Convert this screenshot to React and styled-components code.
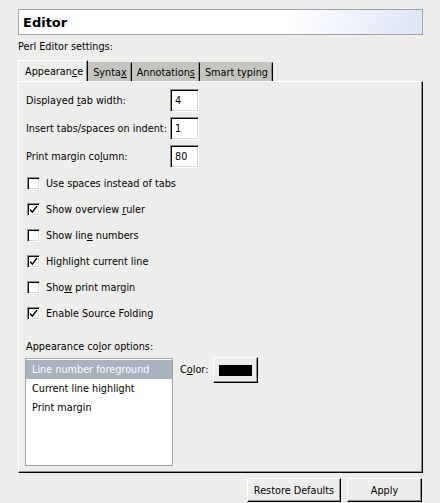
import React from "react";
import styled, { createGlobalStyle } from "styled-components";

const Global = createGlobalStyle`
  html, body {
    margin: 0;
    padding: 0;
    background: #edeeeb;
  }
  body {
    font-family: "DejaVu Sans", Verdana, sans-serif;
    font-size: 9.7px;
    color: #000;
  }
`;

const Page = styled.div`
  width: 440px;
  height: 503px;
  box-sizing: border-box;
  padding: 9px 17px 0 18px;
  display: flex;
  flex-direction: column;
  overflow: hidden;
  white-space: nowrap;
`;

const Header = styled.div`
  height: 26px;
  box-sizing: border-box;
  border: 1px solid #a3a3a3;
  background: linear-gradient(105deg, #ffffff 66%, #dde4f7 100%);
  display: flex;
  align-items: center;
  padding-left: 4px;
  font-size: 13px;
  font-weight: bold;
`;

const Caption = styled.div`
  margin-top: 5px;
  line-height: 14px;
  height: 14px;
`;

const TabBar = styled.div`
  margin-top: 6px;
  display: flex;
  align-items: flex-end;
  height: 21px;
`;

const Tab = styled.div`
  box-sizing: border-box;
  height: ${(p) => (p.$active ? "21px" : "19px")};
  padding: 0 4px 0 ${(p) => (p.$active ? "6px" : "4px")};
  display: flex;
  align-items: center;
  background: ${(p) => (p.$active ? "#edeeeb" : "#c4c5c1")};
  border-top: 1px solid ${(p) => (p.$active ? "#fff" : "#c4c5c1")};
  border-left: 1px solid ${(p) => (p.$active ? "#fff" : "#c4c5c1")};
  border-right: 1px solid #000;
  box-shadow: inset -1px 0 0 #8e8e8c;
`;

const Panel = styled.div`
  height: 392px;
  box-sizing: border-box;
  border-top: 1px solid #fff;
  border-left: 1px solid #fff;
  border-right: 1px solid #000;
  border-bottom: 1px solid #000;
  box-shadow: inset -1px -1px 0 #8e8e8c;
  padding: 7px 8px 0 7px;
  display: flex;
  flex-direction: column;
`;

const FieldGrid = styled.div`
  display: grid;
  grid-template-columns: 144px 29px;
  row-gap: 5px;
  align-items: center;
`;

const Input = styled.div`
  box-sizing: border-box;
  height: 23px;
  background: #fff;
  border-style: solid;
  border-width: 1px;
  border-color: #8e8e8c #fff #fff #8e8e8c;
  box-shadow: inset 1px 1px 0 #000, inset -1px -1px 0 #dcdcda;
  display: flex;
  align-items: center;
  padding-left: 4px;
`;

const Checks = styled.div`
  margin-top: 2px;
  display: flex;
  flex-direction: column;
`;

const CheckRow = styled.div`
  height: 26px;
  display: flex;
  align-items: center;
  padding-left: 1px;
  gap: 6px;
`;

const Box = styled.span`
  box-sizing: border-box;
  width: 13px;
  height: 13px;
  background: #fff;
  border-style: solid;
  border-width: 1px;
  border-color: #8e8e8c #fff #fff #8e8e8c;
  box-shadow: inset 1px 1px 0 #000, inset -1px -1px 0 #dcdcda;
  display: flex;
  align-items: center;
  justify-content: center;
  flex: none;
`;

const SectionLabel = styled.div`
  margin-top: 14px;
  line-height: 14px;
  height: 14px;
`;

const ColorArea = styled.div`
  margin-top: 4px;
  display: flex;
  align-items: flex-start;
`;

const List = styled.div`
  width: 148px;
  height: 108px;
  margin-left: -1px;
  box-sizing: border-box;
  background: #fff;
  border: 1px solid #a4a4a2;
  padding-top: 1px;
  display: flex;
  flex-direction: column;
`;

const ListItem = styled.div`
  height: 19px;
  line-height: 19px;
  padding-left: 6px;
  background: ${(p) => (p.$selected ? "#a8b1bd" : "transparent")};
  color: ${(p) => (p.$selected ? "#fff" : "#000")};
`;

const ColorLabel = styled.div`
  margin: 5px 0 0 7px;
  line-height: 14px;
`;

const RaisedButton = styled.div`
  box-sizing: border-box;
  background: #edeeeb;
  border-style: solid;
  border-width: 1px;
  border-color: #fff #000 #000 #fff;
  box-shadow: inset -1px -1px 0 #8e8e8c;
  display: flex;
  align-items: center;
  justify-content: center;
`;

const ColorButton = styled(RaisedButton)`
  width: 45px;
  height: 26px;
  margin: -1px 0 0 5px;
`;

const Swatch = styled.span`
  width: 33px;
  height: 11px;
  background: #000;
`;

const Footer = styled.div`
  margin-top: 5px;
  display: flex;
  justify-content: flex-end;
  gap: 6px;
  padding-right: 1px;
`;

const FooterButton = styled(RaisedButton)`
  width: ${(p) => p.$w}px;
  height: 24px;
`;

const Check = () => (
  <svg width="9" height="9" viewBox="0 0 9 9">
    <path d="M1 4.5 L3.3 7.2 L8 1" fill="none" stroke="#000" strokeWidth="1.4" />
  </svg>
);

const checks = [
  { label: <>Use spaces instead of tabs</>, on: false },
  { label: <>Show overview <u>r</u>uler</>, on: true },
  { label: <>Show lin<u>e</u> numbers</>, on: false },
  { label: <>Hi<u>g</u>hlight current line</>, on: true },
  { label: <>Sho<u>w</u> print margin</>, on: false },
  { label: <>Enable Source Folding</>, on: true },
];

export default function App() {
  return (
    <>
      <Global />
      <Page>
        <Header>Editor</Header>
        <Caption>Perl Editor settings:</Caption>
        <TabBar>
          <Tab $active>Appearan<u>c</u>e</Tab>
          <Tab>Synta<u>x</u></Tab>
          <Tab>Annotation<u>s</u></Tab>
          <Tab>Smart typing</Tab>
        </TabBar>
        <Panel>
          <FieldGrid>
            <span>Displayed <u>t</u>ab width:</span>
            <Input>4</Input>
            <span>Insert tabs/spaces on indent:</span>
            <Input>1</Input>
            <span>Print margin co<u>l</u>umn:</span>
            <Input>80</Input>
          </FieldGrid>
          <Checks>
            {checks.map((c, i) => (
              <CheckRow key={i}>
                <Box>{c.on && <Check />}</Box>
                <span>{c.label}</span>
              </CheckRow>
            ))}
          </Checks>
          <SectionLabel>Appearance co<u>l</u>or options:</SectionLabel>
          <ColorArea>
            <List>
              <ListItem $selected>Line number foreground</ListItem>
              <ListItem>Current line highlight</ListItem>
              <ListItem>Print margin</ListItem>
            </List>
            <ColorLabel>C<u>o</u>lor:</ColorLabel>
            <ColorButton>
              <Swatch />
            </ColorButton>
          </ColorArea>
        </Panel>
        <Footer>
          <FooterButton $w={94}>Restore Defaults</FooterButton>
          <FooterButton $w={75}>Apply</FooterButton>
        </Footer>
      </Page>
    </>
  );
}
